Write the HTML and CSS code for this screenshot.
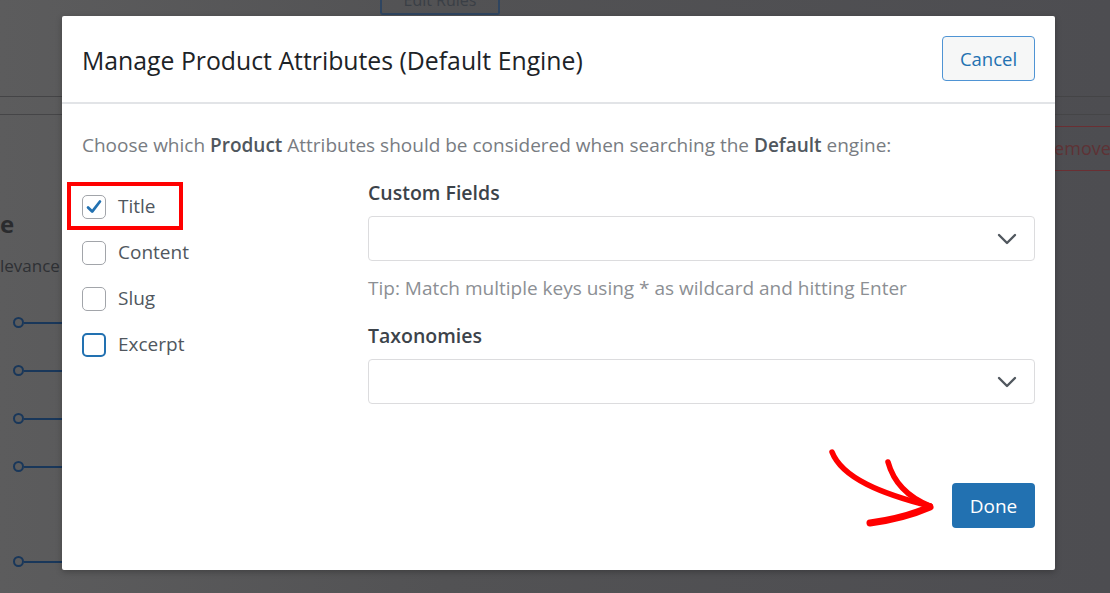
FILE: index.html
```html
<!DOCTYPE html>
<html>
<head>
<meta charset="utf-8">
<link rel="stylesheet" href="styles.css">
</head>
<body>
<div class="page">
  <div class="page-top">
    <div class="edit-rules">Edit Rules</div>
  </div>
  <div class="page-band"></div>
  <div class="page-main">
    <div class="page-left">
      <div class="big-e">e</div>
      <div class="relevance">levance</div>
      <div class="sliders">
        <div class="slider"><span class="knob"></span><span class="track"></span></div>
        <div class="slider"><span class="knob"></span><span class="track"></span></div>
        <div class="slider"><span class="knob"></span><span class="track"></span></div>
        <div class="slider"><span class="knob"></span><span class="track"></span></div>
        <div class="slider gap"><span class="knob"></span><span class="track"></span></div>
      </div>
    </div>
    <div class="page-right">
      <div class="remove-btn">Remove</div>
    </div>
  </div>
</div>

<div class="modal">
  <div class="modal-header">
    <h2 class="modal-title">Manage Product Attributes (Default Engine)</h2>
    <button class="btn-cancel">Cancel</button>
  </div>
  <div class="modal-body">
    <p class="intro">Choose which <strong>Product</strong> Attributes should be considered when searching the <strong>Default</strong> engine:</p>
    <div class="columns">
      <ul class="attr-list">
        <li class="attr">
          <span class="cbox checked">
            <svg viewBox="0 0 24 24" width="24" height="24"><path d="M5.5 12.5 L10 17 L18.5 6" fill="none" stroke="#2271b1" stroke-width="3" stroke-linecap="round" stroke-linejoin="round"/></svg>
          </span>
          <span class="attr-label">Title</span>
        </li>
        <li class="attr"><span class="cbox"></span><span class="attr-label">Content</span></li>
        <li class="attr"><span class="cbox"></span><span class="attr-label">Slug</span></li>
        <li class="attr"><span class="cbox focus"></span><span class="attr-label">Excerpt</span></li>
      </ul>
      <div class="fields">
        <div class="field-label">Custom Fields</div>
        <div class="select">
          <svg class="chev" viewBox="0 0 20 12" width="20" height="12"><path d="M2 2 L10 10 L18 2" fill="none" stroke="#50575e" stroke-width="2.4" stroke-linecap="round" stroke-linejoin="round"/></svg>
        </div>
        <p class="tip">Tip: Match multiple keys using * as wildcard and hitting Enter</p>
        <div class="field-label">Taxonomies</div>
        <div class="select">
          <svg class="chev" viewBox="0 0 20 12" width="20" height="12"><path d="M2 2 L10 10 L18 2" fill="none" stroke="#50575e" stroke-width="2.4" stroke-linecap="round" stroke-linejoin="round"/></svg>
        </div>
      </div>
    </div>
    <div class="modal-footer">
      <button class="btn-done">Done</button>
    </div>
  </div>
  <div class="highlight"></div>
</div>

<svg class="arrow" viewBox="0 0 130 95" width="130" height="95">
  <path d="M12 12 C 22 38, 62 54, 110 66" fill="none" stroke="#ff0000" stroke-width="5.5" stroke-linecap="round"/>
  <path d="M68 22 C 74 44, 90 58, 110 66" fill="none" stroke="#ff0000" stroke-width="5.5" stroke-linecap="round"/>
  <path d="M50 83 C 72 80, 94 74, 110 67" fill="none" stroke="#ff0000" stroke-width="7" stroke-linecap="round"/>
</svg>
</body>
</html>
```

FILE: styles.css
```css
* { box-sizing: border-box; }
html, body { margin: 0; padding: 0; }
body {
  width: 1110px;
  height: 593px;
  overflow: hidden;
  position: relative;
  font-family: "Open Sans", "Noto Sans", sans-serif;
}
.page {
  width: 1110px;
  height: 593px;
  background: linear-gradient(90deg, #5c5c5d 0%, #525254 40%, #4d4d51 100%);
}
.page-top {
  height: 97px;
  border-bottom: 1px solid #444446;
  padding-left: 380px;
}
.edit-rules {
  width: 120px;
  height: 15px;
  border: 2px solid #2f4560;
  border-top: none;
  border-radius: 0 0 3px 3px;
  color: #3a3f46;
  font-size: 16px;
  line-height: 0;
  text-align: center;
  overflow: hidden;
}
.page-band {
  height: 18px;
  border-bottom: 1px solid #454547;
}
.page-main {
  display: flex;
  justify-content: space-between;
}
.page-left {
  width: 62px;
  border-top: 1px solid transparent;
}
.big-e {
  margin-top: 94px;
  font-size: 24px;
  font-weight: 700;
  color: #2a2b2e;
  line-height: 28px;
}
.relevance {
  margin-top: 16px;
  font-size: 17px;
  color: #2e3034;
  line-height: 24px;
  white-space: nowrap;
}
.sliders {
  margin-top: 39px;
  display: flex;
  flex-direction: column;
  gap: 37px;
}
.slider {
  display: flex;
  align-items: center;
  height: 11px;
  padding-left: 13px;
}
.slider.gap { margin-top: 47px; }
.knob {
  width: 11px;
  height: 11px;
  border: 2.5px solid #19375a;
  border-radius: 50%;
  flex: none;
}
.track {
  flex: 1;
  height: 2px;
  background: #19375a;
}
.page-right { padding-top: 11px; }
.remove-btn {
  width: 70px;
  height: 45px;
  margin-right: -10px;
  border: 1.5px solid #6a2f33;
  border-radius: 3px;
  color: #5e3235;
  font-size: 18px;
  line-height: 42px;
  text-indent: -8px;
  overflow: hidden;
  white-space: nowrap;
}

.modal {
  position: absolute;
  left: 62px;
  top: 16px;
  width: 993px;
  height: 554px;
  background: #fff;
  border-radius: 2px;
  box-shadow: 0 2px 6px rgba(0,0,0,0.25);
}
.modal-header {
  height: 88px;
  padding: 0 20px;
  display: flex;
  align-items: center;
  justify-content: space-between;
  border-bottom: 2px solid #e2e4e7;
}
.modal-title {
  margin: 0;
  font-size: 24.8px;
  line-height: 32px;
  font-weight: 400;
  color: #1d2327;
  margin-top: 2px;
}
.btn-cancel {
  width: 93px;
  height: 45px;
  margin-top: -2px;
  border: 1.5px solid #4f94d4;
  border-radius: 4px;
  background: #f6f7f7;
  color: #2271b1;
  font-family: inherit;
  font-size: 18.5px;
  padding: 0;
}
.modal-body {
  padding: 28px 20px 0 20px;
}
.intro {
  margin: 0;
  font-size: 19px;
  line-height: 26px;
  color: #787c82;
}
.intro strong { color: #50575e; font-weight: 600; }
.columns {
  display: flex;
  margin-top: 22px;
}
.attr-list {
  list-style: none;
  margin: 0;
  padding: 0;
  width: 286px;
  flex: none;
  display: flex;
  flex-direction: column;
  gap: 21px;
  padding-top: 14px;
}
.attr {
  display: flex;
  align-items: center;
  height: 25px;
}
.cbox {
  width: 24px;
  height: 24px;
  border: 1.5px solid #a2a5aa;
  border-radius: 5px;
  flex: none;
  display: flex;
  align-items: center;
  justify-content: center;
}
.cbox svg { display: block; }
.cbox.focus { border: 2px solid #2271b1; border-radius: 5px; }
.attr-label {
  margin-left: 12px;
  font-size: 19px;
  line-height: 25px;
  color: #50575e;
}
.fields { flex: 1; }
.field-label {
  font-size: 19.5px;
  font-weight: 600;
  color: #3c434a;
  line-height: 26px;
}
.select {
  margin-top: 10px;
  height: 45px;
  border: 1px solid #dcdcde;
  border-radius: 4px;
  display: flex;
  align-items: center;
  justify-content: flex-end;
  padding-right: 17px;
}
.tip {
  margin: 14px 0 22px 0;
  font-size: 19px;
  line-height: 26px;
  color: #8c8f94;
}
.modal-footer {
  display: flex;
  justify-content: flex-end;
  margin-top: 79px;
}
.btn-done {
  width: 83px;
  height: 45px;
  border: none;
  border-radius: 4px;
  background: #2271b1;
  color: #fff;
  font-family: inherit;
  font-size: 19px;
  padding: 0;
}
.highlight {
  position: absolute;
  left: 5px;
  top: 166px;
  width: 116px;
  height: 48px;
  border: 4px solid #ff0000;
}
.arrow {
  position: absolute;
  left: 820px;
  top: 440px;
}
```
